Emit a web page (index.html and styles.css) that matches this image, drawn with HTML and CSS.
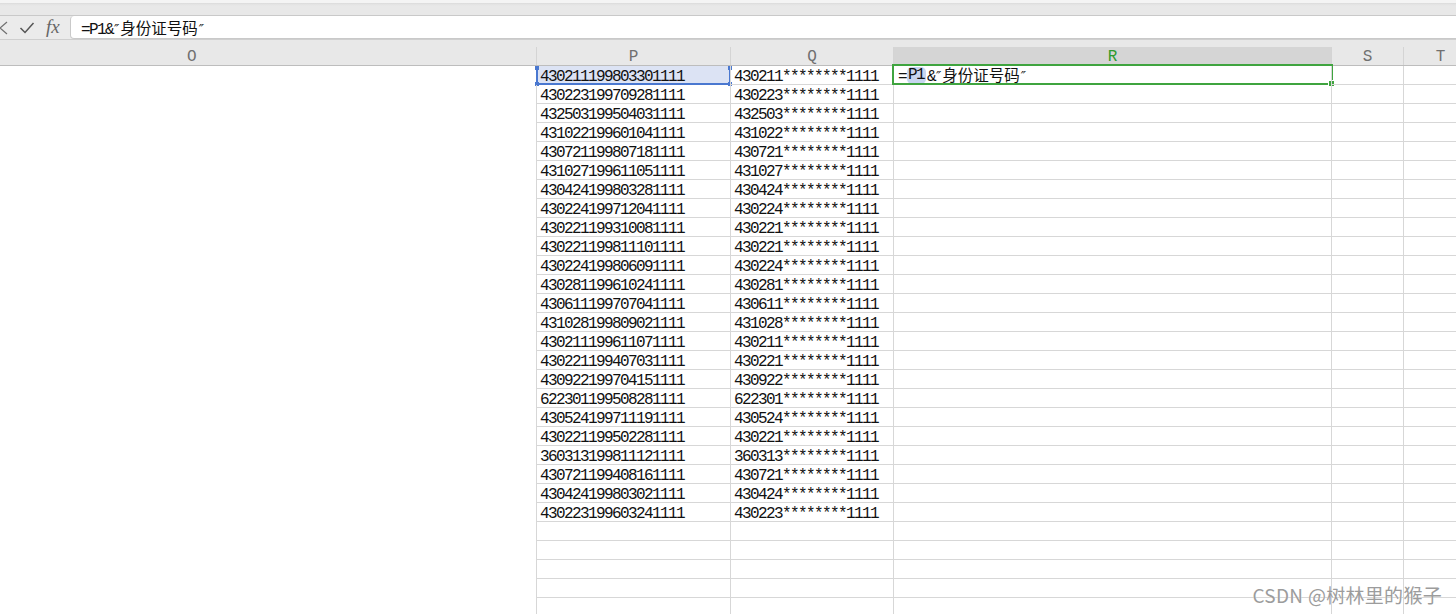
FILE: index.html
```html
<!DOCTYPE html>
<html lang="zh">
<head>
<meta charset="utf-8">
<title>WPS 表格</title>
<link rel="stylesheet" href="styles.css">
</head>
<body>
<div class="app">
  <div class="toolbar-edge"></div>
  <div class="fbar">
    <div class="fbar-icons">
      <svg class="ic-x" width="10" height="14" viewBox="0 0 10 14"><path d="M-6 1 L1 7 L-6 13 M8 1 L1 7 L8 13" fill="none" stroke="#707070" stroke-width="1.2"/></svg>
      <svg class="ic-ok" width="16" height="14" viewBox="0 0 16 14"><path d="M1.5 7 L6 11.5 L14.5 2" fill="none" stroke="#555" stroke-width="1.5"/></svg>
      <span class="ic-fx">fx</span>
    </div>
    <div class="finput"><span class="ftext">=P1&amp;<span class="qt">″</span><span class="cjk">身份证号码</span><span class="qt">″</span></span></div>
  </div>
  <div class="colhead">
    <div class="h o">O</div>
    <div class="h p">P</div>
    <div class="h q">Q</div>
    <div class="h r active">R</div>
    <div class="h s">S</div>
    <div class="h t">T</div>
  </div>
  <div class="sheet">
    <div class="row first"><div class="c o"></div><div class="c p sel-ref">430211199803301111<span class="refbox"><i class="k tl"></i><i class="k bl"></i><i class="k tr"></i><i class="k br"></i></span></div><div class="c q">430211********1111</div><div class="c r editing"><span class="edit">=<span class="hl">P1</span>&amp;<span class="qt">″</span><span class="cjk">身份证号码</span><span class="qt">″</span></span><span class="selbox"><i class="fill"></i></span></div><div class="c s"></div><div class="c t"></div></div>
    <div class="row"><div class="c o"></div><div class="c p">430223199709281111</div><div class="c q">430223********1111</div><div class="c r"></div><div class="c s"></div><div class="c t"></div></div>
    <div class="row"><div class="c o"></div><div class="c p">432503199504031111</div><div class="c q">432503********1111</div><div class="c r"></div><div class="c s"></div><div class="c t"></div></div>
    <div class="row"><div class="c o"></div><div class="c p">431022199601041111</div><div class="c q">431022********1111</div><div class="c r"></div><div class="c s"></div><div class="c t"></div></div>
    <div class="row"><div class="c o"></div><div class="c p">430721199807181111</div><div class="c q">430721********1111</div><div class="c r"></div><div class="c s"></div><div class="c t"></div></div>
    <div class="row"><div class="c o"></div><div class="c p">431027199611051111</div><div class="c q">431027********1111</div><div class="c r"></div><div class="c s"></div><div class="c t"></div></div>
    <div class="row"><div class="c o"></div><div class="c p">430424199803281111</div><div class="c q">430424********1111</div><div class="c r"></div><div class="c s"></div><div class="c t"></div></div>
    <div class="row"><div class="c o"></div><div class="c p">430224199712041111</div><div class="c q">430224********1111</div><div class="c r"></div><div class="c s"></div><div class="c t"></div></div>
    <div class="row"><div class="c o"></div><div class="c p">430221199310081111</div><div class="c q">430221********1111</div><div class="c r"></div><div class="c s"></div><div class="c t"></div></div>
    <div class="row"><div class="c o"></div><div class="c p">430221199811101111</div><div class="c q">430221********1111</div><div class="c r"></div><div class="c s"></div><div class="c t"></div></div>
    <div class="row"><div class="c o"></div><div class="c p">430224199806091111</div><div class="c q">430224********1111</div><div class="c r"></div><div class="c s"></div><div class="c t"></div></div>
    <div class="row"><div class="c o"></div><div class="c p">430281199610241111</div><div class="c q">430281********1111</div><div class="c r"></div><div class="c s"></div><div class="c t"></div></div>
    <div class="row"><div class="c o"></div><div class="c p">430611199707041111</div><div class="c q">430611********1111</div><div class="c r"></div><div class="c s"></div><div class="c t"></div></div>
    <div class="row"><div class="c o"></div><div class="c p">431028199809021111</div><div class="c q">431028********1111</div><div class="c r"></div><div class="c s"></div><div class="c t"></div></div>
    <div class="row"><div class="c o"></div><div class="c p">430211199611071111</div><div class="c q">430211********1111</div><div class="c r"></div><div class="c s"></div><div class="c t"></div></div>
    <div class="row"><div class="c o"></div><div class="c p">430221199407031111</div><div class="c q">430221********1111</div><div class="c r"></div><div class="c s"></div><div class="c t"></div></div>
    <div class="row"><div class="c o"></div><div class="c p">430922199704151111</div><div class="c q">430922********1111</div><div class="c r"></div><div class="c s"></div><div class="c t"></div></div>
    <div class="row"><div class="c o"></div><div class="c p">622301199508281111</div><div class="c q">622301********1111</div><div class="c r"></div><div class="c s"></div><div class="c t"></div></div>
    <div class="row"><div class="c o"></div><div class="c p">430524199711191111</div><div class="c q">430524********1111</div><div class="c r"></div><div class="c s"></div><div class="c t"></div></div>
    <div class="row"><div class="c o"></div><div class="c p">430221199502281111</div><div class="c q">430221********1111</div><div class="c r"></div><div class="c s"></div><div class="c t"></div></div>
    <div class="row"><div class="c o"></div><div class="c p">360313199811121111</div><div class="c q">360313********1111</div><div class="c r"></div><div class="c s"></div><div class="c t"></div></div>
    <div class="row"><div class="c o"></div><div class="c p">430721199408161111</div><div class="c q">430721********1111</div><div class="c r"></div><div class="c s"></div><div class="c t"></div></div>
    <div class="row"><div class="c o"></div><div class="c p">430424199803021111</div><div class="c q">430424********1111</div><div class="c r"></div><div class="c s"></div><div class="c t"></div></div>
    <div class="row"><div class="c o"></div><div class="c p">430223199603241111</div><div class="c q">430223********1111</div><div class="c r"></div><div class="c s"></div><div class="c t"></div></div>
    <div class="row"><div class="c o"></div><div class="c p"></div><div class="c q"></div><div class="c r"></div><div class="c s"></div><div class="c t"></div></div>
    <div class="row"><div class="c o"></div><div class="c p"></div><div class="c q"></div><div class="c r"></div><div class="c s"></div><div class="c t"></div></div>
    <div class="row"><div class="c o"></div><div class="c p"></div><div class="c q"></div><div class="c r"></div><div class="c s"></div><div class="c t"></div></div>
    <div class="row"><div class="c o"></div><div class="c p"></div><div class="c q"></div><div class="c r"></div><div class="c s"></div><div class="c t"></div></div>
    <div class="row"><div class="c o"></div><div class="c p"></div><div class="c q"></div><div class="c r"></div><div class="c s"></div><div class="c t"></div></div>
  </div>
  <div class="watermark">CSDN @树林里的猴子</div>
</div>
</body>
</html>
```

FILE: styles.css
```css
html, body {
  margin: 0;
  padding: 0;
  background: #fff;
  overflow: hidden;
}
.app {
  position: relative;
  width: 1456px;
  height: 614px;
  overflow: hidden;
  font-family: "Liberation Mono", "Noto Sans CJK SC", monospace;
}
.toolbar-edge {
  height: 15px;
  box-sizing: border-box;
  background: linear-gradient(#f4f4f4 0, #f4f4f4 3px, #d9d9d9 3px, #e2e2e2 4px, #e8e8e8 6px, #e8e8e8 100%);
}
.fbar {
  height: 24px;
  box-sizing: border-box;
  display: flex;
  background: #ebebeb;
  border-top: 1px solid #c9c9c9;
}
.fbar-icons {
  width: 70px;
  flex: none;
  display: flex;
  align-items: center;
  position: relative;
}
.ic-x { margin-left: -1px; }
.ic-ok { margin-left: 10px; }
.ic-fx {
  margin-left: 11px;
  font-family: "Liberation Serif", serif;
  font-style: italic;
  font-size: 19px;
  color: #666;
  line-height: 1;
  margin-top: -3px;
}
.finput {
  flex: 1;
  margin-right: -10px;
  background: #fff;
  border: 1px solid #c9c9c9;
  border-top: none;
  border-radius: 4px 0 0 4px;
  display: flex;
  align-items: center;
  padding-left: 10px;
}
.ftext {
  font-family: "Liberation Mono", "Noto Sans CJK SC", monospace;
  font-size: 16px;
  letter-spacing: -1.6px;
  color: #111;
}
.cjk {
  font-family: "Noto Sans CJK SC", sans-serif;
  font-size: 15.5px;
  letter-spacing: 0;
}
.qt {
  font-family: "DejaVu Sans", sans-serif;
  font-style: italic;
  font-size: 14px;
  letter-spacing: 0;
  padding: 0 1px;
}
.colhead {
  height: 27px;
  box-sizing: border-box;
  display: grid;
  grid-template-columns: 536px 194px 163px 438px 72px 74px;
  background: #e8e8e8;
  border-top: 1px solid #cfcfcf;
  border-bottom: 1px solid #bdbdbd;
}
.h {
  position: relative;
  margin-top: 7px;
  padding-top: 2px;
  box-sizing: border-box;
  font-size: 16px;
  color: #707070;
  line-height: 16px;
  text-align: center;
  border-left: 1px solid #d4d4d4;
}
.h.o {
  border-left: none;
  text-align: left;
  padding-left: 187px;
}
.h.active {
  background: #d5d5d5;
  color: #2e9b2e;
}
.sheet {
  display: flex;
  flex-direction: column;
}
.row {
  height: 19px;
  flex: none;
  display: grid;
  grid-template-columns: 536px 194px 163px 438px 72px 74px;
  grid-template-rows: 19px;
}
.c {
  position: relative;
  box-sizing: border-box;
  height: 19px;
  border-left: 1px solid #d7d7d7;
  border-bottom: 1px solid #d7d7d7;
  font-size: 16px;
  letter-spacing: -1.6px;
  color: #111;
  padding: 5px 0 0 3px;
  line-height: 13px;
  white-space: nowrap;
}
.c.o {
  border: none;
}
.c.sel-ref {
  background: #dce3f4;
}
.refbox {
  position: absolute;
  left: -1px;
  top: 0;
  right: -1px;
  bottom: -1px;
  border-left: 2px solid #4a78d0;
  border-right: 2px solid #4a78d0;
  border-bottom: 2px solid #4a78d0;
}
.k {
  position: absolute;
  width: 4px;
  height: 4px;
  background: #4a78d0;
}
.k.tl { left: -3px; top: 0; }
.k.bl { left: -3px; bottom: -3px; }
.k.tr { right: -3px; top: 0; }
.k.br { right: -3px; bottom: -3px; }
.edit {
  padding-left: 1px;
}
.edit .cjk,
.edit .qt {
  line-height: 0;
}
.hl {
  display: inline-block;
  vertical-align: top;
  margin: -4px 1px 0;
  height: 17px;
  box-sizing: border-box;
  padding: 0 2px 0 1px;
  line-height: 17px;
  background: #c7d5ef;
  border-radius: 5px;
}
.selbox {
  position: absolute;
  left: -2px;
  top: -2px;
  right: -2px;
  bottom: -1px;
  border: 2px solid #3fa43f;
}
.fill {
  position: absolute;
  right: -4px;
  bottom: -4px;
  width: 5px;
  height: 5px;
  background: #3fa43f;
  border: 1px solid #fff;
}
.watermark {
  position: absolute;
  right: 14px;
  bottom: 6px;
  font-family: "Noto Sans CJK SC", sans-serif;
  font-size: 19px;
  color: #9c9c9c;
  text-shadow: 0 0 1px #fff;
  letter-spacing: 0.3px;
}
```
